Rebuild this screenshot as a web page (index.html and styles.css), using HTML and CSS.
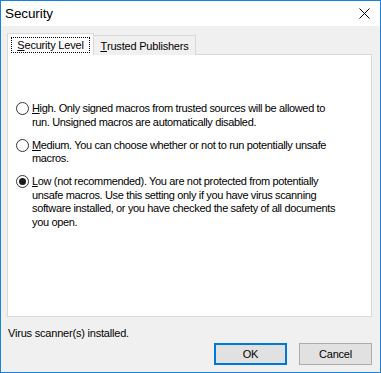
FILE: index.html
```html
<!DOCTYPE html>
<html lang="en">
<head>
    <meta charset="UTF-8">
    <title>Security</title>
    <link rel="stylesheet" href="styles.css">
</head>
<body>
    <div class="dialog">
        <div class="titlebar">
            <span class="title">Security</span>
            <svg class="close" width="11" height="11" viewBox="0 0 11 11">
                <path d="M0.5 0.5 L10.5 10.5 M10.5 0.5 L0.5 10.5" stroke="#000" stroke-width="1" fill="none"/>
            </svg>
        </div>

        <div class="content">
            <!-- Tabs -->
            <div class="tabs">
                <div class="tab active"><span class="focus"><u>S</u>ecurity Level</span></div>
                <div class="tab"><u>T</u>rusted Publishers</div>
            </div>

            <div class="panel">
                <div class="option">
                    <span class="radio"></span>
                    <span class="option-text"><u>H</u>igh. Only signed macros from trusted sources will be allowed to<br>run. Unsigned macros are automatically disabled.</span>
                </div>
                <div class="option">
                    <span class="radio"></span>
                    <span class="option-text"><u>M</u>edium. You can choose whether or not to run potentially unsafe<br>macros.</span>
                </div>
                <div class="option">
                    <span class="radio checked"></span>
                    <span class="option-text"><u>L</u>ow (not recommended). You are not protected from potentially<br>unsafe macros. Use this setting only if you have virus scanning<br>software installed, or you have checked the safety of all documents<br>you open.</span>
                </div>
            </div>

            <div class="status">Virus scanner(s) installed.</div>

            <div class="buttons">
                <button class="btn default">OK</button>
                <button class="btn">Cancel</button>
            </div>
        </div>
    </div>
</body>
</html>
```

FILE: styles.css
```css
body {
    margin: 0;
    padding: 0;
    font-family: "Liberation Sans", Arial, sans-serif;
    font-size: 11px;
    letter-spacing: -0.2px;
    color: #000;
    background-color: #f0f0f0;
}

.dialog {
    width: 381px;
    height: 373px;
    box-sizing: border-box;
    border: 1px solid #1883d7;
    background-color: #f0f0f0;
}

.titlebar {
    height: 25px;
    background-color: #fff;
    display: flex;
    align-items: center;
    justify-content: space-between;
    padding-left: 4px;
    padding-right: 10px;
}

.title {
    font-size: 13.5px;
    letter-spacing: -0.1px;
}

.close {
    display: block;
}

.content {
    padding: 7px 8px 7px 6px;
}

.tabs {
    display: flex;
    align-items: flex-end;
    height: 22px;
    margin-bottom: -1px;
}

.tab {
    box-sizing: border-box;
    width: 103px;
    height: 20px;
    margin-left: -1px;
    border: 1px solid #d9d9d9;
    border-bottom: none;
    background-color: #f0f0f0;
    display: flex;
    align-items: center;
    justify-content: center;
    padding-top: 1px;
}

/* selected tab sits over the panel border */
.tab.active {
    position: relative;
    z-index: 1;
    width: 87px;
    height: 22px;
    margin-left: 0;
    background-color: #fff;
    align-items: flex-start;
    padding-top: 3px;
}

.focus {
    display: block;
    box-sizing: border-box;
    width: 79px;
    height: 16px;
    border: 1px dotted #000;
    text-align: center;
    line-height: 14px;
}

.panel {
    box-sizing: border-box;
    height: 263px;
    background-color: #fff;
    border: 1px solid #d9d9d9;
    padding: 47px 8px 0 8px;
    display: flex;
    flex-direction: column;
    gap: 9.5px;
}

.option {
    display: flex;
    align-items: flex-start;
}

.radio {
    box-sizing: border-box;
    flex: none;
    width: 13px;
    height: 13px;
    border: 1px solid #333;
    border-radius: 50%;
    background-color: #fff;
    display: flex;
    align-items: center;
    justify-content: center;
}

.radio.checked::after {
    content: "";
    width: 7px;
    height: 7px;
    border-radius: 50%;
    background-color: #1a1a1a;
}

.option-text {
    margin-left: 3px;
    line-height: 13.5px;
    letter-spacing: -0.35px;
    white-space: nowrap;
}

.status {
    margin-top: 10px;
    margin-left: 1px;
    line-height: 13px;
}

.buttons {
    display: flex;
    justify-content: flex-end;
    gap: 12px;
    margin-top: 3px;
}

.btn {
    box-sizing: border-box;
    width: 73px;
    height: 22px;
    border: 1px solid #adadad;
    background-color: #e1e1e1;
    font-family: "Liberation Sans", Arial, sans-serif;
    font-size: 11px;
    letter-spacing: -0.2px;
    color: #000;
    padding: 0;
}

.btn.default {
    border: 2px solid #0078d7;
}
```
